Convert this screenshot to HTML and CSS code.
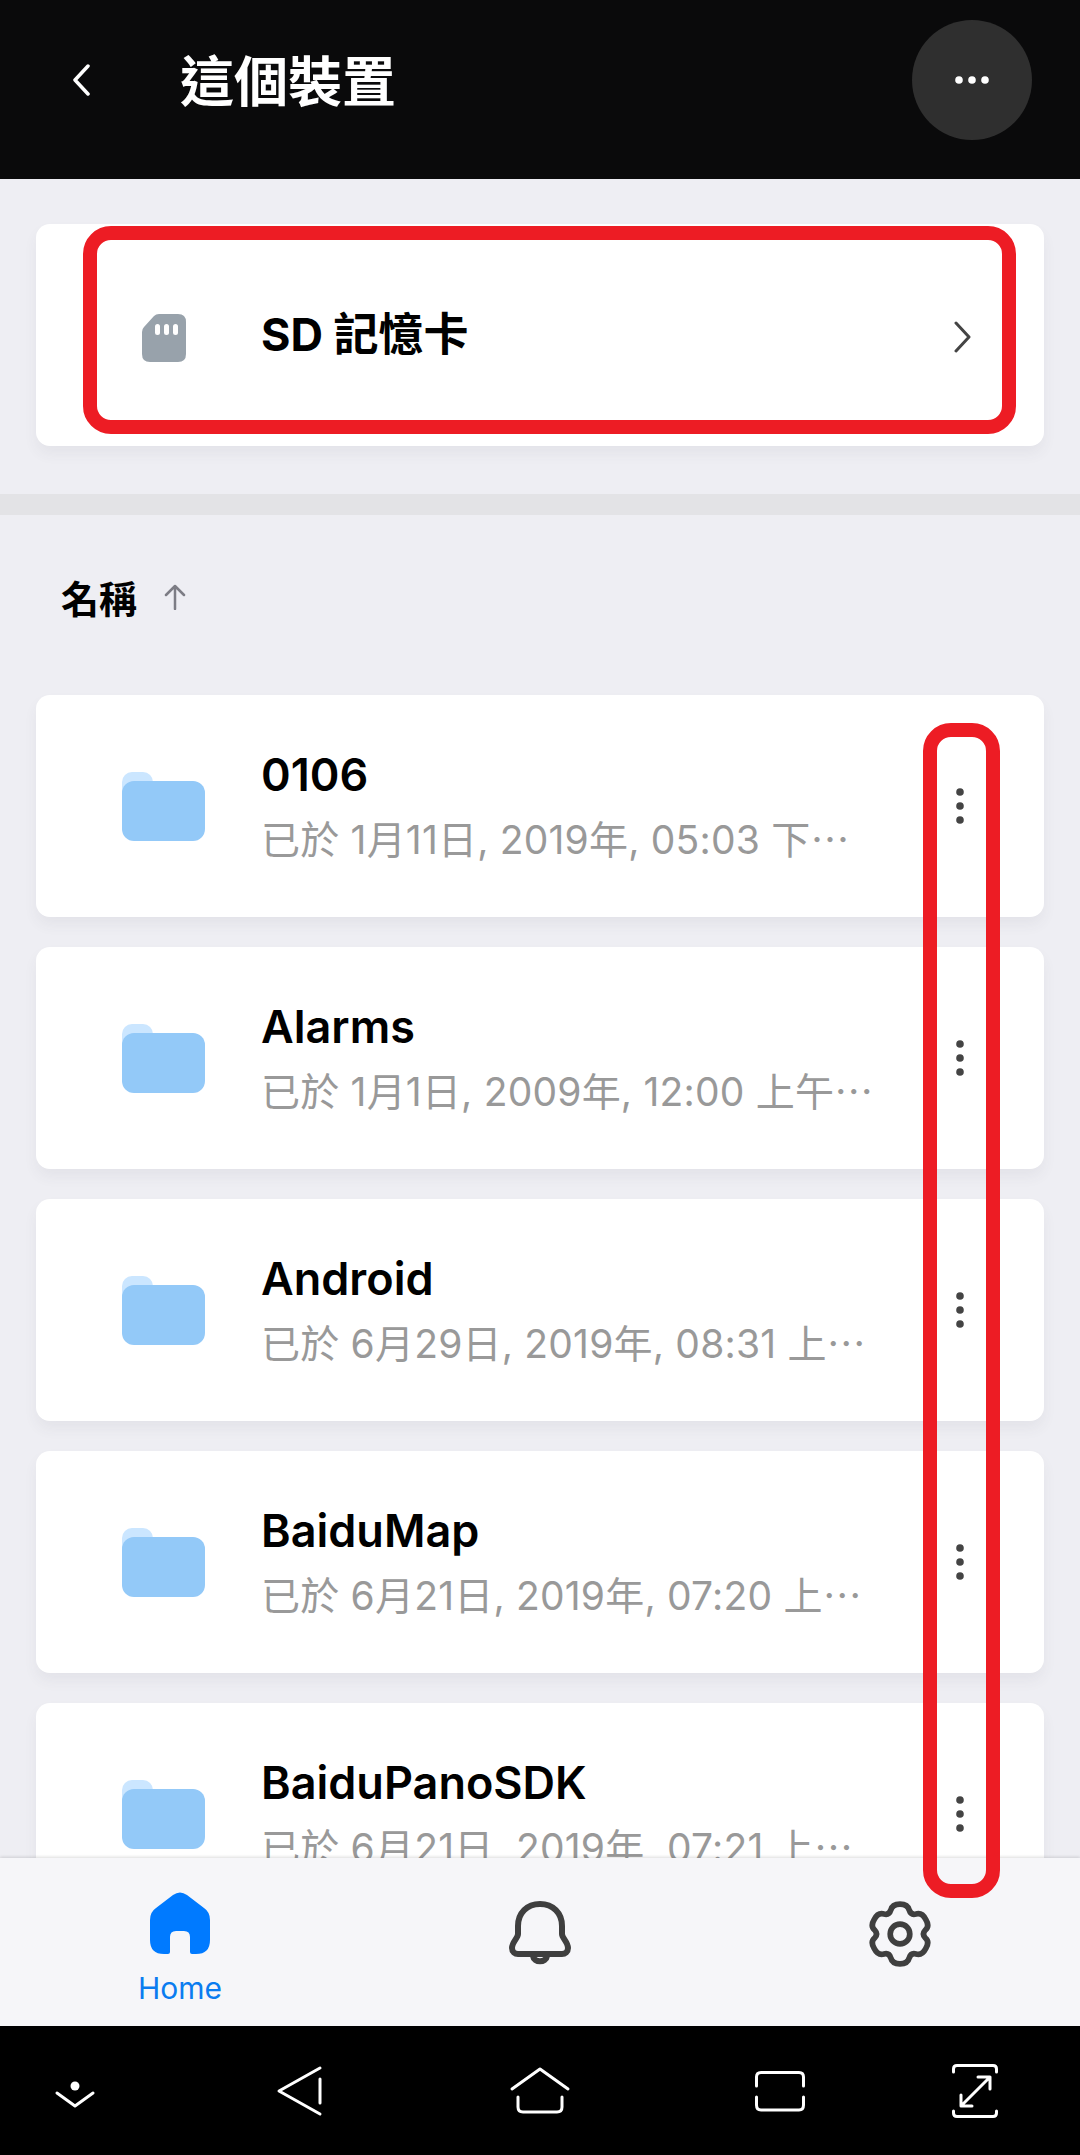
FILE: index.html
```html
<!DOCTYPE html>
<html lang="zh-Hant">
<head>
    <meta charset="UTF-8">
    <meta name="viewport" content="width=device-width, initial-scale=1.0">
    <title>這個裝置</title>
    <link rel="stylesheet" href="styles.css">
</head>
<body>
    <svg class="sprites" width="0" height="0">
        <symbol id="folder" viewBox="0 0 83 70">
            <rect x="0" y="0" width="31" height="30" rx="10" fill="#cbe6ff"/>
            <rect x="0" y="9" width="83" height="60" rx="12" fill="#93c9f8"/>
        </symbol>
        <symbol id="dots" viewBox="0 0 10 36">
            <circle cx="5" cy="4" r="3.8" fill="#444"/>
            <circle cx="5" cy="18" r="3.8" fill="#444"/>
            <circle cx="5" cy="32" r="3.8" fill="#444"/>
        </symbol>
    </svg>

    <div class="app">
        <header class="topbar">
            <svg class="back" width="18" height="32" viewBox="0 0 18 32"><path d="M16 2 L3 16 L16 30" fill="none" stroke="#fff" stroke-width="3.5" stroke-linecap="round" stroke-linejoin="round"/></svg>
            <h1>這個裝置</h1>
            <button class="more" type="button">
                <svg width="36" height="8" viewBox="0 0 36 8"><circle cx="5" cy="4" r="3.8" fill="#fff"/><circle cx="18" cy="4" r="3.8" fill="#fff"/><circle cx="31" cy="4" r="3.8" fill="#fff"/></svg>
            </button>
        </header>

        <main class="content">
            <section class="card sd-card">
                <svg class="sd-icon" width="44" height="48" viewBox="0 0 44 48"><path d="M17 0 H36 Q44 0 44 8 V40 Q44 48 36 48 H8 Q0 48 0 40 V18 Q0 15 2 13 L12 2 Q14 0 17 0Z" fill="#98a2ab"/><rect x="13" y="10" width="5" height="11" rx="2.5" fill="#fff"/><rect x="22" y="10" width="5" height="11" rx="2.5" fill="#fff"/><rect x="31" y="10" width="5" height="11" rx="2.5" fill="#fff"/></svg>
                <span class="sd-label">SD 記憶卡</span>
                <svg class="chevron" width="18" height="32" viewBox="0 0 18 32"><path d="M2 2 L15 16 L2 30" fill="none" stroke="#444" stroke-width="3" stroke-linecap="round" stroke-linejoin="round"/></svg>
            </section>

            <div class="band"></div>

            <div class="sort">
                <span>名稱</span>
                <svg width="22" height="26" viewBox="0 0 22 26"><path d="M11 25 V2 M2 11 L11 2 L20 11" fill="none" stroke="#7d7d85" stroke-width="2.5" stroke-linecap="round" stroke-linejoin="round"/></svg>
            </div>

            <div class="list">
                <article class="card file">
                    <svg class="folder" width="83" height="70"><use href="#folder"/></svg>
                    <div class="meta">
                        <div class="name">0106</div>
                        <div class="date">已於 1月11日, 2019年, 05:03 下<span class="cut">…</span></div>
                    </div>
                    <svg class="kebab" width="10" height="36"><use href="#dots"/></svg>
                </article>
                <article class="card file">
                    <svg class="folder" width="83" height="70"><use href="#folder"/></svg>
                    <div class="meta">
                        <div class="name">Alarms</div>
                        <div class="date">已於 1月1日, 2009年, 12:00 上午<span class="cut">…</span></div>
                    </div>
                    <svg class="kebab" width="10" height="36"><use href="#dots"/></svg>
                </article>
                <article class="card file">
                    <svg class="folder" width="83" height="70"><use href="#folder"/></svg>
                    <div class="meta">
                        <div class="name">Android</div>
                        <div class="date">已於 6月29日, 2019年, 08:31 上<span class="cut">…</span></div>
                    </div>
                    <svg class="kebab" width="10" height="36"><use href="#dots"/></svg>
                </article>
                <article class="card file">
                    <svg class="folder" width="83" height="70"><use href="#folder"/></svg>
                    <div class="meta">
                        <div class="name">BaiduMap</div>
                        <div class="date">已於 6月21日, 2019年, 07:20 上<span class="cut">…</span></div>
                    </div>
                    <svg class="kebab" width="10" height="36"><use href="#dots"/></svg>
                </article>
                <article class="card file">
                    <svg class="folder" width="83" height="70"><use href="#folder"/></svg>
                    <div class="meta">
                        <div class="name">BaiduPanoSDK</div>
                        <div class="date">已於 6月21日, 2019年, 07:21 上<span class="cut">…</span></div>
                    </div>
                    <svg class="kebab" width="10" height="36"><use href="#dots"/></svg>
                </article>
            </div>
        </main>

        <nav class="tabbar">
            <div class="tab tab-active">
                <svg width="60" height="62" viewBox="0 0 60 62"><path d="M23 3 Q30 -2 37 3 L54 16 Q60 20 60 28 V48 Q60 62 46 62 H42 Q40 62 40 60 V45 Q40 39 34 39 H26 Q20 39 20 45 V60 Q20 62 18 62 H14 Q0 62 0 48 V28 Q0 20 6 16Z" fill="#007aff"/></svg>
                <span>Home</span>
            </div>
            <div class="tab">
                <svg width="62" height="64" viewBox="0 0 62 64"><path d="M9 25 C9 12 18 3 31 3 S53 12 53 25 V33 C53 37 59 41 59 47 C59 51 56 53 53 53 H9 C6 53 3 51 3 47 C3 41 9 37 9 33Z M24 55 C25 62 37 62 38 55" fill="none" stroke="#3f3f3f" stroke-width="6" stroke-linejoin="round" stroke-linecap="round"/></svg>
            </div>
            <div class="tab">
                <svg width="66" height="66" viewBox="0 0 64 64"><path d="M32 3 Q39.5 3 41 8.9 Q42.5 13.8 47.5 12.65 Q53.5 11 57 18 Q61 24.5 56.5 28.25 Q53 32 56.5 35.75 Q61 39.5 57 46 Q53.5 53 47.5 51.35 Q42.5 50.2 41 55.1 Q39.5 61 32 61 Q24.5 61 23 55.1 Q21.5 50.2 16.5 51.35 Q10.5 53 7 46 Q3 39.5 7.5 35.75 Q11 32 7.5 28.25 Q3 24.5 7 18 Q10.5 11 16.5 12.65 Q21.5 13.8 23 8.9 Q24.5 3 32 3Z" fill="none" stroke="#3f3f3f" stroke-width="5.5" stroke-linejoin="round"/><circle cx="32" cy="32" r="9.5" fill="none" stroke="#3f3f3f" stroke-width="5.5"/></svg>
            </div>
        </nav>

        <div class="sysbar">
            <svg width="1080" height="129" viewBox="0 2026 1080 129" fill="none" stroke="#fff" stroke-width="3" stroke-linecap="round" stroke-linejoin="round">
                <circle cx="75" cy="2086" r="4.5" fill="#fff" stroke="none"/>
                <path d="M57 2093 L75 2106 L93 2093"/>
                <path d="M320 2068 L279 2091 L320 2114 M320 2079 V2103"/>
                <path d="M512 2089 L540 2069 L568 2089 M518 2097 V2107 Q518 2112 523 2112 H557 Q562 2112 562 2107 V2097"/>
                <path d="M756.5 2086 V2077 Q756.5 2072.5 761 2072.5 H799 Q803.5 2072.5 803.5 2077 V2086 M756.5 2097 V2105 Q756.5 2110 761 2110 H799 Q803.5 2110 803.5 2105 V2097"/>
                <path d="M953.5 2072 V2069 Q953.5 2065.5 957 2065.5 H993 Q996.5 2065.5 996.5 2069 V2072 M953.5 2111 V2113 Q953.5 2116.5 957 2116.5 H993 Q996.5 2116.5 996.5 2113 V2111"/>
                <path d="M961 2106 L990 2077 M978 2077 H990 V2089 M961 2095 V2106 H972"/>
            </svg>
        </div>

        <!-- annotation frames drawn on top of the screenshot -->
        <div class="mark mark-sd"></div>
        <div class="mark mark-kebabs"></div>
    </div>
</body>
</html>
```

FILE: styles.css
```css
* {
    box-sizing: border-box;
}
body {
    margin: 0;
    font-family: Inter, "Noto Sans CJK TC", sans-serif;
}
.sprites {
    position: absolute;
}
.app {
    position: relative;
    display: flex;
    flex-direction: column;
    width: 1080px;
    height: 2155px;
    overflow: hidden;
    background-color: #eeeef3;
}
svg {
    display: block;
    flex-shrink: 0;
}

/* top bar */
.topbar {
    display: flex;
    align-items: center;
    height: 179px;
    padding: 20px 48px 39px 72px;
    background-color: #0a0a0b;
}
.topbar h1 {
    margin: 6px 0 0 90px;
    color: #fff;
    font-size: 54px;
    line-height: 114px;
    font-weight: 700;
}
.more {
    display: flex;
    align-items: center;
    justify-content: center;
    width: 120px;
    height: 120px;
    margin-left: auto;
    padding: 0;
    border: none;
    border-radius: 50%;
    background-color: #2f2f2f;
}

/* content */
.content {
    flex: 1;
    min-height: 0;
    overflow: hidden;
    padding-top: 45px;
}
.card {
    margin: 0 36px;
    height: 222px;
    display: flex;
    align-items: center;
    background-color: #fff;
    border-radius: 14px;
    box-shadow: 0 8px 14px rgba(60, 60, 90, 0.06);
}
.sd-card {
    padding: 0 72px 0 106px;
}
.sd-icon {
    margin-top: 5px;
}
.sd-label {
    margin: 0 0 8px 75px;
    font-size: 45px;
    font-weight: 700;
    color: #000;
}
.chevron {
    margin-left: auto;
    margin-top: 4px;
}
.band {
    height: 21px;
    margin-top: 48px;
    background-color: #e3e3e6;
}
.sort {
    display: flex;
    align-items: center;
    gap: 27px;
    height: 168px;
    margin-bottom: 12px;
    padding: 0 0 5px 61px;
    font-size: 38px;
    font-weight: 700;
    color: #000;
}
.list {
    display: flex;
    flex-direction: column;
    gap: 30px;
}
.file {
    flex-shrink: 0;
    padding: 0 79px 0 86px;
}
.folder {
    margin-top: 2px;
}
.meta {
    margin-left: 56px;
    padding-top: 3px;
}
.name {
    font-size: 45px;
    line-height: 56px;
    font-weight: 600;
    color: #000;
}
.date {
    margin-top: 6px;
    font-size: 39px;
    line-height: 56px;
    letter-spacing: 0.2px;
    color: #999;
    white-space: nowrap;
}
.cut {
    font-family: "Noto Sans CJK TC", sans-serif;
}
.kebab {
    margin-left: auto;
}

/* tab bar */
.tabbar {
    position: relative;
    display: grid;
    grid-template-columns: repeat(3, 1fr);
    height: 168px;
    flex-shrink: 0;
    background-color: #f6f6f9;
    box-shadow: 0 -1px 3px rgba(0, 0, 0, 0.14);
}
.tab {
    display: flex;
    flex-direction: column;
    align-items: center;
    padding-top: 43px;
}
.tab-active {
    padding-top: 34px;
    color: #0a7cf0;
    font-size: 30px;
    line-height: 36px;
}
.tab-active span {
    margin-top: 16px;
}

/* system navigation */
.sysbar {
    height: 129px;
    flex-shrink: 0;
    background-color: #000;
}

/* red annotation frames */
.mark {
    position: absolute;
    border: 14px solid #ed1c24;
    border-radius: 28px;
}
.mark-sd {
    left: 83px;
    top: 226px;
    width: 933px;
    height: 208px;
}
.mark-kebabs {
    left: 923px;
    top: 723px;
    width: 77px;
    height: 1175px;
}
```
